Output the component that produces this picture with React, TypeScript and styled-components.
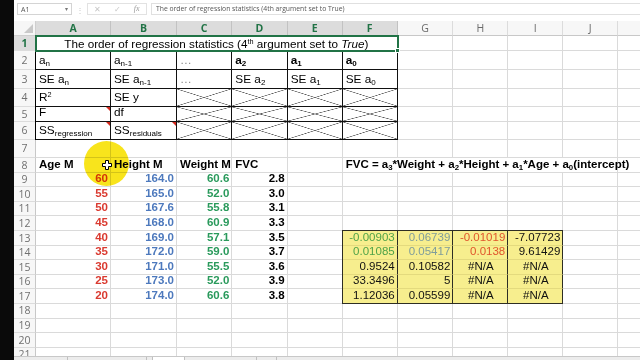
import React from 'react';
import styled, { createGlobalStyle } from 'styled-components';

const Global = createGlobalStyle`
  *, *::before, *::after { box-sizing: border-box; }
  html, body { margin: 0; padding: 0; background: #fff; }
  body { width: 640px; height: 360px; overflow: hidden; }
`;

const GREEN = '#217346';
const GRID = '#dadada';

const Page = styled.div`
  position: relative;
  width: 640px;
  height: 360px;
  display: flex;
  overflow: hidden;
  background: #fff;
  font-family: "Liberation Sans", Arial, sans-serif;
`;

const SideBar = styled.div`
  width: 14px;
  flex: none;
  background: #0a0a0a;
`;

const Window = styled.div`
  flex: 1;
  min-width: 0;
  display: flex;
  flex-direction: column;
`;

const FormulaBar = styled.div`
  height: 21px;
  flex: none;
  display: flex;
  align-items: flex-start;
  padding: 3px 0 0 3px;
  background: #fff;
  font-family: "Open Sans", sans-serif;
  font-size: 7px;
  color: #555;
`;

const NameBox = styled.div`
  width: 55px;
  height: 12px;
  border: 1px solid #d4d4d4;
  display: flex;
  align-items: center;
  justify-content: space-between;
  padding: 0 3px;
  line-height: 1;
`;

const Arrow = styled.span`
  font-size: 6px;
  color: #777;
`;

const Dots = styled.div`
  width: 15px;
  height: 12px;
  display: flex;
  align-items: center;
  justify-content: center;
  color: #c8c8c8;
  font-size: 8px;
`;

const FxGroup = styled.div`
  width: 60px;
  height: 12px;
  border: 1px solid #e2e2e2;
  display: flex;
  align-items: center;
  justify-content: space-around;
  color: #c6c6c6;
  font-size: 8px;
  line-height: 1;
`;

const Fx = styled.span`
  font-style: italic;
  font-family: "Liberation Serif", serif;
  color: #9a9a9a;
  font-size: 8px;
`;

const FormulaInput = styled.div`
  flex: 1;
  height: 12px;
  margin-left: 4px;
  border: 1px solid #e0e0e0;
  border-right: none;
  display: flex;
  align-items: center;
  padding-left: 4px;
  font-size: 6.8px;
  color: #555;
  white-space: nowrap;
  line-height: 1;
`;

const Sheet = styled.div`
  flex: 1;
  min-height: 0;
  overflow: hidden;
  display: grid;
  grid-template-columns: 22px 75px 66px 55.3px 55.4px 55px 55px 55.6px 55px 55px 55px 55px;
  grid-template-rows: 15px 15px 19px 19px 18px 15px 18px 18px repeat(14, 14.6px);
  align-content: start;
`;

const Corner = styled.div`
  position: relative;
  background: #f6f6f6;
  border-right: 1px solid #cfcfcf;
  border-bottom: 1px solid #cfcfcf;
  &::after {
    content: '';
    position: absolute;
    right: 2px;
    bottom: 2px;
    border-style: solid;
    border-width: 0 0 9px 9px;
    border-color: transparent transparent #c9c9c9 transparent;
  }
`;

const ColHead = styled.div<{ $sel?: boolean }>`
  display: flex;
  align-items: center;
  justify-content: center;
  font-family: "Open Sans", sans-serif;
  font-size: 10.5px;
  line-height: 1;
  background: ${p => (p.$sel ? '#dcdcdc' : '#f7f7f7')};
  color: ${p => (p.$sel ? GREEN : '#6a6a6a')};
  font-weight: ${p => (p.$sel ? 700 : 400)};
  border-right: 1px solid ${p => (p.$sel ? '#c2c2c2' : '#dcdcdc')};
  border-bottom: 1px solid ${p => (p.$sel ? GREEN : '#c8c8c8')};
`;

const RowHead = styled.div<{ $sel?: boolean }>`
  display: flex;
  align-items: center;
  justify-content: center;
  font-family: "Open Sans", sans-serif;
  font-size: 10.5px;
  line-height: 1;
  background: ${p => (p.$sel ? '#dcdcdc' : '#f7f7f7')};
  color: ${p => (p.$sel ? GREEN : '#707070')};
  font-weight: ${p => (p.$sel ? 700 : 400)};
  border-right: 1px solid ${p => (p.$sel ? GREEN : '#c8c8c8')};
  border-bottom: 1px solid #dcdcdc;
`;

type Align = 'left' | 'right' | 'center';
const justify = (a?: Align) => (a === 'right' ? 'flex-end' : a === 'center' ? 'center' : 'flex-start');

const Cell = styled.div<{ $align?: Align; $bold?: boolean; $color?: string; $span?: number }>`
  grid-column: ${p => (p.$span ? `span ${p.$span}` : 'auto')};
  min-width: 0;
  display: flex;
  align-items: flex-end;
  justify-content: ${p => justify(p.$align)};
  padding: 0 2px 1px 3px;
  border-right: 1px solid ${GRID};
  border-bottom: 1px solid ${GRID};
  font-size: 11.5px;
  line-height: 13px;
  white-space: nowrap;
  font-weight: ${p => (p.$bold ? 700 : 400)};
  color: ${p => p.$color ?? '#000'};
`;

const TitleCell = styled.div`
  grid-column: span 6;
  position: relative;
  display: flex;
  align-items: center;
  justify-content: center;
  font-size: 11.7px;
  line-height: 13px;
  white-space: nowrap;
  border-right: 1px solid ${GRID};
  border-bottom: 1px solid #000;
  outline: 2px solid ${GREEN};
  outline-offset: -1px;
  z-index: 1;
  &::after {
    content: '';
    position: absolute;
    right: -3px;
    bottom: -3px;
    width: 5px;
    height: 5px;
    background: ${GREEN};
    border: 1px solid #fff;
  }
`;

const Sup = styled.sup`
  font-size: 0.62em;
  line-height: 0;
  vertical-align: 0.55em;
`;

const Sub = styled.sub`
  font-size: 0.68em;
  line-height: 0;
  vertical-align: -0.3em;
`;

const StatsTable = styled.div`
  grid-column: 2 / span 6;
  grid-row: 3 / span 5;
  margin-left: -1px;
  border-left: 1px solid #000;
  display: grid;
  grid-template-columns: 75px 66px 55.3px 55.4px 55px 55px;
  grid-template-rows: 19px 19px 18px 15px 18px;
`;

const StatCell = styled.div<{ $bold?: boolean; $muted?: boolean; $note?: boolean; $cross?: boolean }>`
  position: relative;
  min-width: 0;
  display: flex;
  align-items: flex-end;
  padding: 0 2px 2px 3px;
  border-right: 1px solid #111;
  border-bottom: 1px solid #111;
  font-size: 11.8px;
  line-height: 13px;
  white-space: nowrap;
  font-weight: ${p => (p.$bold ? 700 : 400)};
  color: ${p => (p.$muted ? '#8a8a8a' : '#000')};
  background: ${p =>
    p.$cross
      ? `linear-gradient(to top right, transparent calc(50% - 0.6px), #5a5a5a 50%, transparent calc(50% + 0.6px)),
         linear-gradient(to bottom right, transparent calc(50% - 0.6px), #5a5a5a 50%, transparent calc(50% + 0.6px))`
      : 'transparent'};
  &::after {
    content: '';
    display: ${p => (p.$note ? 'block' : 'none')};
    position: absolute;
    top: 0;
    right: 0;
    border-style: solid;
    border-width: 0 4px 4px 0;
    border-color: transparent #d42a1e transparent transparent;
  }
`;

const LinestTable = styled.div`
  grid-column: 7 / span 4;
  grid-row: 14 / span 5;
  margin: -1px 0 0 -1px;
  border-left: 1px solid #2e2e24;
  border-top: 1px solid #2e2e24;
  background: #f7ee8e;
  display: grid;
  grid-template-columns: 55px 55.6px 55px 55px;
  grid-template-rows: repeat(5, 14.6px);
`;

const LCell = styled.div<{ $color?: string; $align?: Align }>`
  display: flex;
  align-items: flex-end;
  justify-content: ${p => justify(p.$align)};
  padding: 0 2px 1px 3px;
  border-right: 1px solid #2e2e24;
  border-bottom: 1px solid rgba(120, 110, 40, 0.15);
  font-size: 11.5px;
  line-height: 13px;
  white-space: nowrap;
  color: ${p => p.$color ?? '#111'};
  &:nth-last-child(-n + 4) {
    border-bottom: 1px solid #2e2e24;
  }
`;

const TabBar = styled.div`
  height: 4px;
  flex: none;
  display: flex;
  background: #ececec;
  border-top: 1px solid #c8c8c8;
`;

const Tab = styled.div<{ $w: number; $active?: boolean }>`
  width: ${p => p.$w}px;
  flex: none;
  background: ${p => (p.$active ? '#fff' : 'transparent')};
  border-right: 1px solid #c0c0c0;
`;

const Highlight = styled.div`
  position: absolute;
  left: 84px;
  top: 141px;
  width: 45px;
  height: 45px;
  border-radius: 50%;
  background: #f8e41c;
  mix-blend-mode: multiply;
  pointer-events: none;
`;

const Pointer = styled.svg`
  position: absolute;
  left: 102px;
  top: 160px;
  pointer-events: none;
`;

const Stat: React.FC<React.ComponentProps<typeof StatCell>> = ({ children, ...rest }) => (
  <StatCell {...rest}>
    <span>{children}</span>
  </StatCell>
);

const COLS = ['A', 'B', 'C', 'D', 'E', 'F', 'G', 'H', 'I', 'J', 'K'];
const SEL = new Set(['A', 'B', 'C', 'D', 'E', 'F']);

const AGE = ['60', '55', '50', '45', '40', '35', '30', '25', '20'];
const HEIGHT = ['164.0', '165.0', '167.6', '168.0', '169.0', '172.0', '171.0', '173.0', '174.0'];
const WEIGHT = ['60.6', '52.0', '55.8', '60.9', '57.1', '59.0', '55.5', '52.0', '60.6'];
const FVC = ['2.8', '3.0', '3.1', '3.3', '3.5', '3.7', '3.6', '3.9', '3.8'];

const LINEST = [
  ['-0.00903', '0.06739', '-0.01019', '-7.07723'],
  ['0.01085', '0.05417', '0.0138', '9.61429'],
  ['0.9524', '0.10582', '#N/A', '#N/A'],
  ['33.3496', '5', '#N/A', '#N/A'],
  ['1.12036', '0.05599', '#N/A', '#N/A'],
];
const LINEST_COLORS = ['#4fa348', '#7f9d9b', '#e0552c', '#111'];

const RED = '#da3a30';
const BLUE = '#4d79bd';
const WGREEN = '#2a9a5c';

const empties = (row: number, cols: string[]) =>
  cols.map(c => <Cell key={`${c}${row}`} />);

export default function App() {
  const cells: React.ReactNode[] = [];

  cells.push(<Corner key="corner" />);
  COLS.forEach(c =>
    cells.push(
      <ColHead key={`h${c}`} $sel={SEL.has(c)}>
        {c === 'K' ? '' : c}
      </ColHead>
    )
  );

  // Row 1
  cells.push(<RowHead key="r1" $sel>1</RowHead>);
  cells.push(
    <TitleCell key="title">
      <span>
        The order of regression statistics (4<Sup>th</Sup> argument set to <i>True</i>)
      </span>
    </TitleCell>
  );
  cells.push(...empties(1, ['G', 'H', 'I', 'J', 'K']));

  // Rows 2-6 (A-F filled by StatsTable)
  for (let r = 2; r <= 6; r++) {
    cells.push(<RowHead key={`r${r}`}>{r}</RowHead>);
    cells.push(...empties(r, ['G', 'H', 'I', 'J', 'K']));
  }

  // Row 7
  cells.push(<RowHead key="r7">7</RowHead>);
  cells.push(...empties(7, COLS));

  // Row 8
  cells.push(<RowHead key="r8">8</RowHead>);
  cells.push(<Cell key="A8" $bold>Age M</Cell>);
  cells.push(<Cell key="B8" $bold>Height M</Cell>);
  cells.push(<Cell key="C8" $bold>Weight M</Cell>);
  cells.push(<Cell key="D8" $bold>FVC</Cell>);
  cells.push(<Cell key="E8" />);
  cells.push(
    <Cell key="F8" $bold $span={5}>
      <span>
        FVC = a<Sub>3</Sub>*Weight + a<Sub>2</Sub>*Height + a<Sub>1</Sub>*Age + a<Sub>0</Sub>(intercept)
      </span>
    </Cell>
  );
  cells.push(<Cell key="K8" />);

  // Rows 9-17
  for (let i = 0; i < 9; i++) {
    const r = 9 + i;
    cells.push(<RowHead key={`r${r}`}>{r}</RowHead>);
    cells.push(<Cell key={`A${r}`} $align="right" $bold $color={RED}>{AGE[i]}</Cell>);
    cells.push(<Cell key={`B${r}`} $align="right" $bold $color={BLUE}>{HEIGHT[i]}</Cell>);
    cells.push(<Cell key={`C${r}`} $align="right" $bold $color={WGREEN}>{WEIGHT[i]}</Cell>);
    cells.push(<Cell key={`D${r}`} $align="right" $bold>{FVC[i]}</Cell>);
    cells.push(<Cell key={`E${r}`} />);
    if (r < 13) cells.push(...empties(r, ['F', 'G', 'H', 'I']));
    cells.push(...empties(r, ['J', 'K']));
  }

  // Rows 18-21
  for (let r = 18; r <= 21; r++) {
    cells.push(<RowHead key={`r${r}`}>{r}</RowHead>);
    cells.push(...empties(r, COLS));
  }

  return (
    <Page>
      <Global />
      <SideBar />
      <Window>
        <FormulaBar>
          <NameBox>
            <span>A1</span>
            <Arrow>▾</Arrow>
          </NameBox>
          <Dots>⋮</Dots>
          <FxGroup>
            <span>✕</span>
            <span>✓</span>
            <Fx>fx</Fx>
          </FxGroup>
          <FormulaInput>The order of regression statistics (4th argument set to True)</FormulaInput>
        </FormulaBar>
        <Sheet>
          {cells}
          <StatsTable>
            <Stat>a<Sub>n</Sub></Stat>
            <Stat>a<Sub>n-1</Sub></Stat>
            <Stat $muted>…</Stat>
            <Stat $bold>a<Sub>2</Sub></Stat>
            <Stat $bold>a<Sub>1</Sub></Stat>
            <Stat $bold>a<Sub>0</Sub></Stat>

            <Stat>SE a<Sub>n</Sub></Stat>
            <Stat>SE a<Sub>n-1</Sub></Stat>
            <Stat $muted>…</Stat>
            <Stat>SE a<Sub>2</Sub></Stat>
            <Stat>SE a<Sub>1</Sub></Stat>
            <Stat>SE a<Sub>0</Sub></Stat>

            <Stat>R<Sup>2</Sup></Stat>
            <Stat>SE y</Stat>
            <Stat $cross />
            <Stat $cross />
            <Stat $cross />
            <Stat $cross />

            <Stat $note>F</Stat>
            <Stat>df</Stat>
            <Stat $cross />
            <Stat $cross />
            <Stat $cross />
            <Stat $cross />

            <Stat $note>SS<Sub>regression</Sub></Stat>
            <Stat $note>SS<Sub>residuals</Sub></Stat>
            <Stat $cross />
            <Stat $cross />
            <Stat $cross />
            <Stat $cross />
          </StatsTable>
          <LinestTable>
            {LINEST.map((row, ri) =>
              row.map((v, ci) => (
                <LCell
                  key={`${ri}-${ci}`}
                  $align={v === '#N/A' ? 'center' : 'right'}
                  $color={ri < 2 ? LINEST_COLORS[ci] : '#111'}
                >
                  {v}
                </LCell>
              ))
            )}
          </LinestTable>
        </Sheet>
        <TabBar>
          <Tab $w={54} />
          <Tab $w={79} />
          <Tab $w={6} />
          <Tab $w={32} $active />
          <Tab $w={72} />
          <Tab $w={20} />
        </TabBar>
      </Window>
      <Highlight />
      <Pointer width="10" height="10" viewBox="0 0 10 10">
        <path d="M3.5 0.5H6.5V3.5H9.5V6.5H6.5V9.5H3.5V6.5H0.5V3.5H3.5Z" fill="#fff" stroke="#000" strokeWidth="1" />
      </Pointer>
    </Page>
  );
}
